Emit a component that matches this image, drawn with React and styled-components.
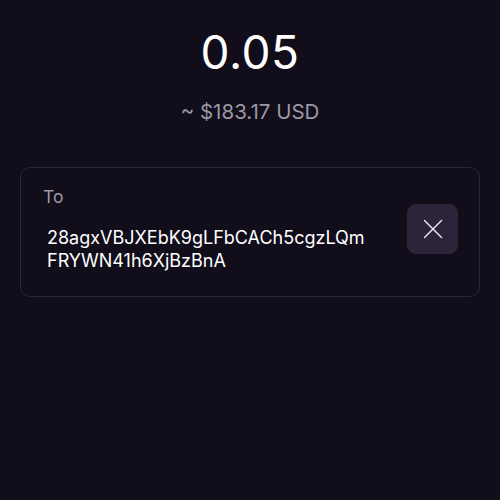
import React from "react";
import styled, { createGlobalStyle } from "styled-components";
import { X } from "lucide-react";

const GlobalStyle = createGlobalStyle`
  html, body {
    margin: 0;
    padding: 0;
    background: #110d1a;
  }
  body {
    font-family: Inter, "Noto Sans", sans-serif;
    color: #ffffff;
  }
`;

const Screen = styled.div`
  width: 500px;
  height: 500px;
  box-sizing: border-box;
  padding: 24px 20px 0;
  display: flex;
  flex-direction: column;
  align-items: center;
`;

const Amount = styled.div`
  font-size: 46px;
  font-weight: 400;
  line-height: 56px;
  letter-spacing: 0.5px;
`;

const Fiat = styled.div`
  margin-top: 20px;
  font-size: 20.5px;
  line-height: 24px;
  color: #9b98a3;
`;

const Card = styled.div`
  margin-top: 43px;
  width: 100%;
  box-sizing: border-box;
  border: 1px solid #2a2535;
  border-radius: 10px;
  padding: 17px 21px 24px 22px;
  display: flex;
  align-items: center;
  justify-content: space-between;
`;

const Details = styled.div`
  display: flex;
  flex-direction: column;
`;

const Label = styled.div`
  font-size: 17.5px;
  line-height: 24px;
  color: #9b98a3;
`;

const Address = styled.div`
  margin-top: 17px;
  padding-left: 4px;
  font-size: 18px;
  line-height: 23px;
  white-space: nowrap;
`;

const ClearButton = styled.button`
  width: 51px;
  height: 50px;
  border: none;
  border-radius: 9px;
  background: #2e2439;
  color: #e9e6ef;
  display: flex;
  align-items: center;
  justify-content: center;
  padding: 0;
`;

export default function App() {
  return (
    <>
      <GlobalStyle />
      <Screen>
        <Amount>0.05</Amount>
        <Fiat>~ $183.17 USD</Fiat>
        <Card>
          <Details>
            <Label>To</Label>
            <Address>
              28agxVBJXEbK9gLFbCACh5cgzLQm
              <br />
              FRYWN41h6XjBzBnA
            </Address>
          </Details>
          <ClearButton>
            <X size={34} strokeWidth={1.5} absoluteStrokeWidth />
          </ClearButton>
        </Card>
      </Screen>
    </>
  );
}
